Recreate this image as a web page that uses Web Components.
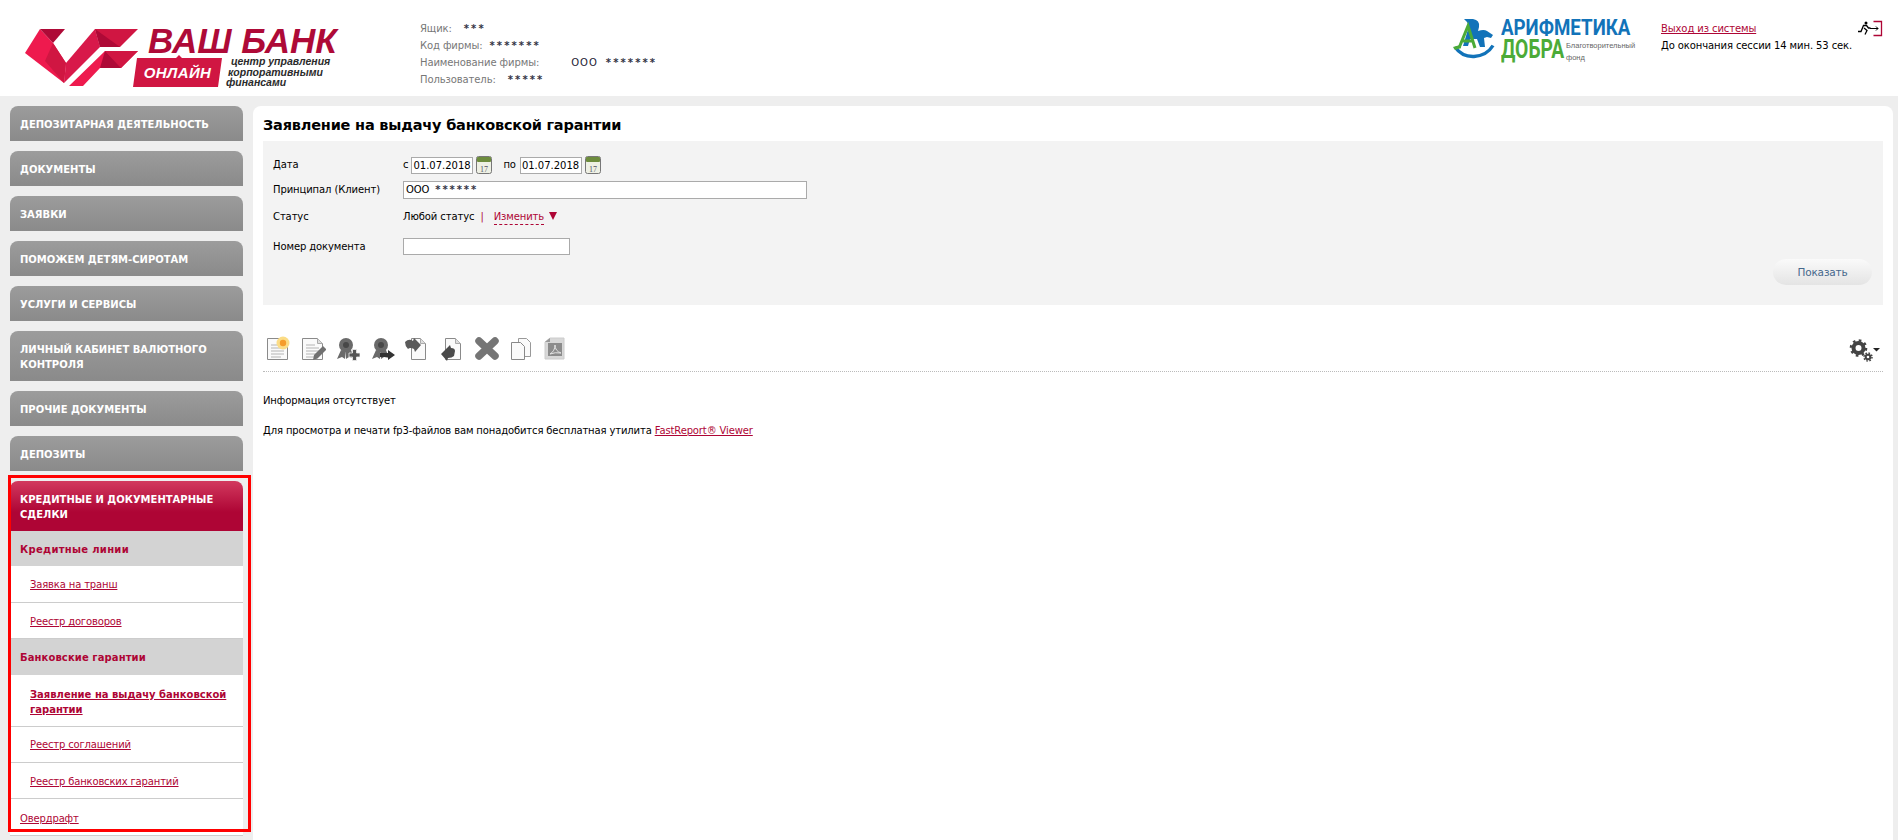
<!DOCTYPE html>
<html lang="ru">
<head>
<meta charset="utf-8">
<title>Заявление на выдачу банковской гарантии</title>
<style>
  html, body { margin: 0; height: 100%; overflow: hidden; }
  body { background: #eee; font: 10px/14px "DejaVu Sans", sans-serif; color: #000; letter-spacing: -.1px; }
</style>
</head>
<body>
<bank-header></bank-header>
<page-body>
  <side-menu slot="side"></side-menu>
  <doc-panel slot="main"></doc-panel>
</page-body>

<script>
// шапка
class BankHeader extends HTMLElement {
  constructor() {
    super();
    this.attachShadow({ mode: 'open' });
    this.shadowRoot.innerHTML = `
      <style>
        :host { display: flex; height: 96px; background: #fff; position: relative; }
        .logo { display: grid; grid-template-columns: 113px auto; column-gap: 10px; width: 420px; flex: none; padding: 28px 0 0 25px; box-sizing: border-box; letter-spacing: 0; }
        .mark { display: block; }
        .name { font: italic bold 35px/26px "Liberation Sans", sans-serif; color: #ae0a37; white-space: nowrap; }
        .sub { display: flex; margin: 1px 0 0 -15px; }
        .online { width: 89px; height: 32px; box-sizing: border-box; padding-top: 3px; background: #d01642; color: #fff;
          clip-path: polygon(4px 3px, 43px 3px, 46px 0, 49px 3px, 100% 3px, 85px 100%, 0 100%);
          font: italic bold 15px/29px "Liberation Sans", sans-serif; text-align: center; letter-spacing: .4px; }
        .tag { font: italic bold 10.5px/10.5px "Liberation Sans", sans-serif; color: #2b2b2b; margin-left: 4px; padding-top: 1px; }
        .tag span { display: block; }
        .tag span:nth-child(1) { padding-left: 5px; }
        .tag span:nth-child(2) { padding-left: 2px; }
        .info { padding-top: 20px; color: #777; width: 1025px; flex: none; }
        .info div { height: 17px; line-height: 17px; white-space: nowrap; display: flex; }
        .info b { font-weight: normal; color: #223; }
        .info .s { font-weight: bold; letter-spacing: 2.1px; color: #334; }
        .fund { display: grid; grid-template-columns: 42px auto; column-gap: 6px; width: 208px; flex: none; padding-top: 19px; height: 60px; margin-left: 8px; letter-spacing: 0; }
        .fund .a { font: bold 22px/18px "Roboto", sans-serif; color: #1273b9; transform: scaleX(.85); transform-origin: 0 0; white-space: nowrap; }
        .fund .d { display: flex; margin-top: 3px; }
        .fund .d b { font: bold 25px/20px "Roboto", sans-serif; color: #4cab38; width: 65px; transform: scaleX(.77); transform-origin: 0 0; }
        .fund small { font: 7.5px/12px "Liberation Sans", sans-serif; color: #666; margin-top: 0; white-space: nowrap; }
        .out { padding-top: 20px; white-space: nowrap; flex: 1; }
        .out div { height: 17px; line-height: 17px; }
        a { color: #ae0535; }
        .exit { position: absolute; left: 1858px; top: 20px; }
      </style>
      <div class="logo">
        <svg class="mark" width="113" height="59" viewBox="0 0 113 59">
          <polygon points="0,25 15,1 28,15 41,35 39,55" fill="#ee1a4e"/>
          <polygon points="15,1 40,1 28,15" fill="#ae0a37"/>
          <polygon points="28,15 41,35 39,55 20,33" fill="#d01642"/>
          <polygon points="41,35 70,1 75,19 39,55" fill="#d8194a"/>
          <polygon points="70,1 113,1 95,19 75,19" fill="#d01642"/>
          <polygon points="70,1 95,19 75,19" fill="#ae0a37"/>
          <polygon points="80,23 113,23 96,40 75,40 58,58 44,58" fill="#ee1a4e"/>
          <polygon points="80,23 113,23 96,40" fill="#d01642"/>
          <polygon points="80,23 96,40 75,40" fill="#ae0a37"/>
        </svg>
        <div>
          <div class="name">ВАШ БАНК</div>
          <div class="sub">
            <div class="online">ОНЛАЙН</div>
            <div class="tag"><span>центр управления</span><span>корпоративными</span><span>финансами</span></div>
          </div>
        </div>
      </div>
      <div class="info">
        <div>Ящик:<b class="s" style="margin-left:12px">***</b></div>
        <div>Код фирмы:<b class="s" style="margin-left:7px">*******</b></div>
        <div>Наименование фирмы:<b style="margin-left:32px;letter-spacing:1px">ООО</b><b class="s" style="margin-left:8px">*******</b></div>
        <div>Пользователь:<b class="s" style="margin-left:12px">*****</b></div>
      </div>
      <div class="fund">
        <svg width="42" height="40" viewBox="0 0 42 40">
          <path d="M11 0 h9 q7 1 6 8 l-1 4 q6 -2 9 0 l6 4 -2 3 -4 -1 -3 1 1 9 h-5 l-3 -8 h-7 l-2 7 h-5 l6 -20 q-1 -4 -5 -7z" fill="#1273b9"/>
          <path d="M6 29 L15 7 L22 29 M10 22 h10" fill="none" stroke="#4cab38" stroke-width="3"/>
          <path d="M2 28 q7 10 19 9.5 q13 -1 19 -11" fill="none" stroke="#1273b9" stroke-width="3.4"/>
          <path d="M0 28 l7 -2 1 3 -6 2z" fill="#4cab38"/>
        </svg>
        <div>
          <div class="a">АРИФМЕТИКА</div>
          <div class="d"><b>ДОБРА</b><small>Благотворительный<br>фонд</small></div>
        </div>
      </div>
      <div class="out">
        <div><a href="#">Выход из системы</a></div>
        <div>До окончания сессии 14 мин. 53 сек.</div>
      </div>
      <svg class="exit" width="25" height="17" viewBox="0 0 25 17">
        <circle cx="8" cy="3" r="1.5" fill="#000"/>
        <path d="M0 11.5 h3 l2.5 -6 h3 l2 2.5 h2 M6 8 l3 2.5 -2 4" fill="none" stroke="#000" stroke-width="1.3"/>
        <path d="M15.5 1.5 h8 v14 h-8" fill="none" stroke="#ae0535" stroke-width="1.3"/>
        <path d="M12 8.5 h8 M18 6.5 l2 2 -2 2" fill="none" stroke="#000" stroke-width="1"/>
      </svg>
    `;
  }
}

class PageBody extends HTMLElement {
  constructor() {
    super();
    this.attachShadow({ mode: 'open' });
    this.shadowRoot.innerHTML = `
      <style>
        :host { display: flex; padding: 10px 5px 0 10px; column-gap: 10px; height: 744px; box-sizing: border-box; }
        .side { display: block; width: 233px; flex: none; }
        .main { display: block; flex: 1; min-width: 0; }
      </style>
      <div class="side"><slot name="side"></slot></div>
      <div class="main"><slot name="main"></slot></div>
    `;
  }
}

// пункт верхнего уровня
class MenuHead extends HTMLElement {
  constructor() {
    super();
    this.attachShadow({ mode: 'open' });
    this.shadowRoot.innerHTML = `
      <style>
        :host { display: block; border-radius: 8px 8px 0 0; background: linear-gradient(#9c9c9c, #8a8a8a); color: #fff;
          font-weight: bold; padding: 11px 10px 9px; line-height: 15px; margin-bottom: 10px; text-transform: uppercase; letter-spacing: 0; }
        :host([active]) { background: linear-gradient(#d2395e 0, #ae0535 62%); margin-bottom: 0; }
      </style>
      <slot></slot>
    `;
  }
}

class MenuGroup extends HTMLElement {
  constructor() {
    super();
    this.attachShadow({ mode: 'open' });
    this.shadowRoot.innerHTML = `
      <style>
        :host { display: block; height: 35px; line-height: 37px; background: #d3d3d3; color: #ae0535; font-weight: bold; padding-left: 10px; letter-spacing: .1px; }
      </style>
      <slot></slot>
    `;
  }
}

class MenuLink extends HTMLElement {
  constructor() {
    super();
    this.attachShadow({ mode: 'open' });
    this.shadowRoot.innerHTML = `
      <style>
        :host { display: block; background: #fff; border-bottom: 1px solid #ccc; padding: 11px 10px 9px 20px; line-height: 15px; color: #ae0535; text-decoration: underline; letter-spacing: -.15px; }
        :host([current]) { font-weight: bold; letter-spacing: 0; padding-top: 12px; padding-bottom: 9px; }
        :host([top]) { padding-left: 10px; padding-top: 12px; padding-bottom: 9px; }
      </style>
      <slot></slot>
    `;
  }
}

class SideMenu extends HTMLElement {
  constructor() {
    super();
    this.attachShadow({ mode: 'open' });
    this.shadowRoot.innerHTML = `
      <style>
        :host { display: block; }
        /* красная рамка вокруг открытого раздела */
        .open { position: relative; }
        .frame { position: absolute; left: -2px; right: -8px; top: -6px; bottom: 4px; border: 3px solid #f00; pointer-events: none; }
      </style>
      <menu-head>Депозитарная деятельность</menu-head>
      <menu-head>Документы</menu-head>
      <menu-head>Заявки</menu-head>
      <menu-head>Поможем детям-сиротам</menu-head>
      <menu-head>Услуги и сервисы</menu-head>
      <menu-head>Личный кабинет валютного контроля</menu-head>
      <menu-head>Прочие документы</menu-head>
      <menu-head>Депозиты</menu-head>
      <div class="open">
        <menu-head active>Кредитные и документарные сделки</menu-head>
        <menu-group style="letter-spacing:.3px">Кредитные линии</menu-group>
        <menu-link style="padding-bottom:10px">Заявка на транш</menu-link>
        <menu-link>Реестр договоров</menu-link>
        <menu-group style="height:36px">Банковские гарантии</menu-group>
        <menu-link current>Заявление на выдачу банковской гарантии</menu-link>
        <menu-link style="padding-top:10px;padding-bottom:10px">Реестр соглашений</menu-link>
        <menu-link>Реестр банковских гарантий</menu-link>
        <menu-link top>Овердрафт</menu-link>
        <div class="frame"></div>
      </div>
    `;
  }
}

class DateField extends HTMLElement {
  constructor() {
    super();
    this.attachShadow({ mode: 'open' });
    this.shadowRoot.innerHTML = `
      <style>
        :host { display: inline-flex; align-items: center; }
        .v { box-sizing: border-box; width: 62px; height: 17px; line-height: 15px; background: #fff; border: 1px solid #aaa; padding-left: 1px; white-space: nowrap; overflow: hidden; letter-spacing: 0; }
        svg { margin-left: 3px; }
      </style>
      <div class="v"><slot></slot></div>
      <svg width="16" height="18" viewBox="0 0 16 18">
        <rect x=".5" y=".5" width="15" height="17" rx="2" fill="#eef0e4" stroke="#777"/>
        <rect x="1" y="1" width="14" height="5" rx="1" fill="#6d8c3d"/>
        <text x="8" y="15.5" font-size="8" font-family="Liberation Serif" fill="#556" text-anchor="middle">17</text>
      </svg>
    `;
  }
}

class FilterForm extends HTMLElement {
  constructor() {
    super();
    this.attachShadow({ mode: 'open' });
    this.shadowRoot.innerHTML = `
      <style>
        :host { display: block; height: 164px; box-sizing: border-box; background: #f3f3f3; padding: 15px 11px 0 10px; position: relative; }
        .row { display: grid; grid-template-columns: 130px 1fr; align-items: center; }
        .r1 { height: 17px; } .r2 { height: 18px; margin-top: 8px; } .r3 { height: 16px; margin-top: 10px; } .r4 { height: 17px; margin-top: 13px; }
        .dates { display: flex; align-items: center; }
        .dates span { margin-right: 3px; }
        .dates .po { margin: 0 4px 0 11px; }
        .box { box-sizing: border-box; height: 100%; background: #fff; border: 1px solid #aaa; padding-left: 2px; line-height: 16px; }
        .box i { font-style: normal; font-weight: bold; letter-spacing: 1.9px; color: #334; margin-left: 6px; }
        .r4 .box { margin-top: -1px; }
        .status { display: flex; white-space: nowrap; }
        .sep { color: #ae0535; margin: 0 10px 0 6px; }
        .chg { color: #ae0535; border-bottom: 1px dashed #ae0535; line-height: 13px; height: 14px; }
        .tri { width: 0; height: 0; border: 4.5px solid transparent; border-top: 8px solid #ae0535; border-bottom: 0; margin: 2px 0 0 5px; }
        .go { position: absolute; left: 1510px; top: 118px; width: 99px; height: 26px; border-radius: 13px; line-height: 27px; text-align: center;
          background: linear-gradient(#fafafa, #e4e4e4); color: #46688c; font-size: 10.5px; letter-spacing: -.15px; }
      </style>
      <div class="row r1"><div>Дата</div>
        <div class="dates"><span>с</span><date-field>01.07.2018</date-field><span class="po">по</span><date-field>01.07.2018</date-field></div></div>
      <div class="row r2"><div>Принципал (Клиент)</div><div class="box" style="width:404px">ООО<i>******</i></div></div>
      <div class="row r3"><div>Статус</div>
        <div class="status">Любой статус<span class="sep">|</span><span class="chg">Изменить</span><span class="tri"></span></div></div>
      <div class="row r4"><div>Номер документа</div><div class="box" style="width:167px"></div></div>
      <div class="go">Показать</div>
    `;
  }
}

class ToolBar extends HTMLElement {
  constructor() {
    super();
    this.attachShadow({ mode: 'open' });
    // лист с загнутым углом, x - левый край
    const page = (x, extra) => `<svg width="24" height="26" viewBox="0 0 24 26">
      <path d="M${x + .5} 2.5 h${15 - x} l5 5 v16 h-${20 - x}z" fill="#fafafa" stroke="#8a8a8a"/>
      <path d="M${x + .5 + 15 - x} 2.5 v5 h5" fill="#ddd" stroke="#aaa"/>${extra}</svg>`;
    const lines = `<path d="M4 9h9M4 12h13M4 15h13M4 18h13M4 21h10" stroke="#b4b4b4"/>`;
    const rosette = `<circle cx="10" cy="9" r="7" fill="#6a6a6a"/><circle cx="10" cy="9" r="3" fill="#484848"/><path d="M5 14 l-4 9 5 -2 3 2 1 -8z M15 14 l3 8 -5 -1 -3 2 0 -9z" fill="#6a6a6a"/>`;
    const arrowR = `<path d="M0 6 q4 -4 8 -1 l1 -3 7 7 -6 7 -1 -3 q-4 -2 -6 0 q-3 -3 -3 -7z" fill="#5a5a5a"/>`;
    const arrowL = `<path d="M15 15 q0 -3 -4 -3 l-1 -3 -9 9 6 7 1 -3 q4 0 6 -2z" fill="#4a4a4a"/>`;
    this.shadowRoot.innerHTML = `
      <style>
        :host { display: flex; align-items: flex-start; height: 67px; box-sizing: border-box; padding: 31px 0 0 4px; border-bottom: 1px dotted #bbb; column-gap: 10.5px; position: relative; }
        svg { display: block; flex: none; }
        .cfg { position: absolute; right: 2px; top: 34px; }
      </style>
      ${page(0, lines + '<circle cx="16" cy="7" r="6.5" fill="#fbdc86"/><circle cx="16" cy="7" r="3.2" fill="#f59c2c"/>')}
      ${page(0, lines + '<path d="M11 24 l1 -5 9 -9 3.5 3.5 -9 9z" fill="#707070"/>')}
      <svg width="24" height="26" viewBox="0 0 24 26">${rosette}<path d="M13 17 h3.5 v-3.5 h4 v3.5 h3.5 v4 h-3.5 v3.5 h-4 v-3.5 h-3.5z" fill="#555" stroke="#eee" stroke-width=".8"/></svg>
      <svg width="24" height="26" viewBox="0 0 24 26">${rosette}<path d="M9 17 h8 v-3 l7 5 -7 5 v-3 h-8z" fill="#333"/></svg>
      ${page(6, arrowR)}
      ${page(5, arrowL)}
      <svg width="26" height="26" viewBox="0 0 26 26" style="margin:0 -2px 0 0"><path d="M5 5 L21 20 M21 5 L5 20" stroke="#757575" stroke-width="7.5" stroke-linecap="round"/></svg>
      <svg width="24" height="26" viewBox="0 0 24 26">
        <path d="M9.5 2.5 h8 l4 4 v14 h-12z" fill="#fafafa" stroke="#999"/>
        <path d="M2.5 6.5 h9 l4 4 v13 h-13z" fill="#fafafa" stroke="#888"/></svg>
      <svg width="24" height="26" viewBox="0 0 24 26">
        <path d="M2 6 l5 -4 h14 v21 h-19z" fill="#d8d8d8" stroke="#ccc"/>
        <path d="M2 6 l5 -4 v4z" fill="#999"/>
        <rect x="5" y="7" width="14" height="13" fill="#8c8c8c"/>
        <path d="M7 18 q5 -3 5 -9 q0 6 6 8 q-6 -1 -11 1z" fill="none" stroke="#e4e4e4"/></svg>
      <svg class="cfg" width="32" height="24" viewBox="0 0 32 24">
        <g fill="none" stroke="#444">
          <circle cx="9.5" cy="9" r="5" stroke-width="4"/>
          <circle cx="9.5" cy="9" r="7.6" stroke-width="2.4" stroke-dasharray="2.6 3.37"/>
          <circle cx="19" cy="18" r="2.3" stroke-width="2"/>
          <circle cx="19" cy="18" r="4" stroke-width="1.5" stroke-dasharray="1.6 1.54"/>
        </g>
        <path d="M24 9 h7 l-3.5 3.5z" fill="#222"/>
      </svg>
    `;
  }
}

class DocPanel extends HTMLElement {
  constructor() {
    super();
    this.attachShadow({ mode: 'open' });
    this.shadowRoot.innerHTML = `
      <style>
        :host { display: block; height: 734px; background: #fff; border-radius: 8px 8px 0 0; padding: 0 10px; box-sizing: border-box; }
        h1 { margin: 0; height: 35px; font: bold 14.5px/39px "DejaVu Sans", sans-serif; letter-spacing: -.2px; }
        p { margin: 0; line-height: 14px; letter-spacing: -.13px; }
        .none { margin-top: 22px; }
        .hint { margin-top: 16px; }
        a { color: #ae0535; }
      </style>
      <h1>Заявление на выдачу банковской гарантии</h1>
      <filter-form></filter-form>
      <tool-bar></tool-bar>
      <p class="none">Информация отсутствует</p>
      <p class="hint">Для просмотра и печати fp3-файлов вам понадобится бесплатная утилита <a href="#">FastReport® Viewer</a></p>
    `;
  }
}

customElements.define('bank-header', BankHeader);
customElements.define('page-body', PageBody);
customElements.define('menu-head', MenuHead);
customElements.define('menu-group', MenuGroup);
customElements.define('menu-link', MenuLink);
customElements.define('side-menu', SideMenu);
customElements.define('date-field', DateField);
customElements.define('filter-form', FilterForm);
customElements.define('tool-bar', ToolBar);
customElements.define('doc-panel', DocPanel);
</script>
</body>
</html>
